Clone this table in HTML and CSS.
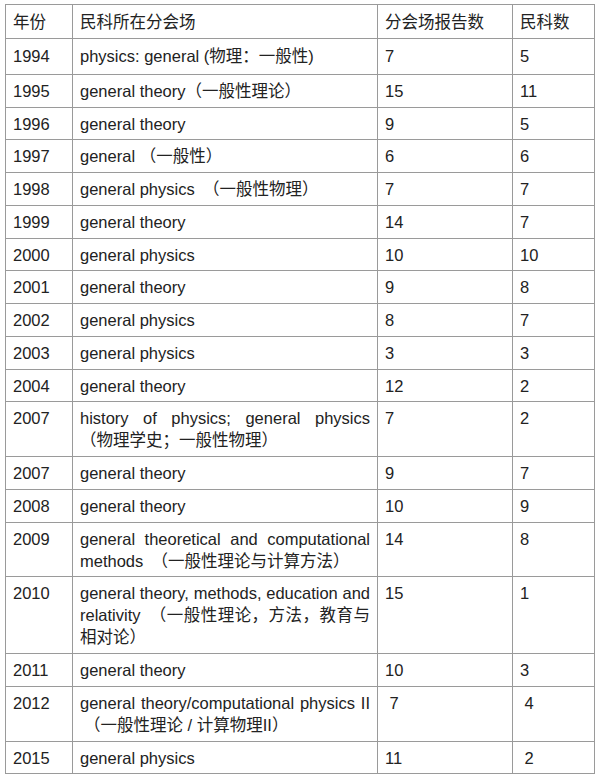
FILE: index.html
```html
<!DOCTYPE html>
<html lang="zh">
<head>
<meta charset="utf-8">
<title>民科所在分会场</title>
<link rel="stylesheet" href="styles.css">
</head>
<body>
<table class="data">
  <colgroup>
    <col class="c-year">
    <col class="c-session">
    <col class="c-reports">
    <col class="c-count">
  </colgroup>
  <thead>
    <tr><th>年份</th><th>民科所在分会场</th><th>分会场报告数</th><th>民科数</th></tr>
  </thead>
  <tbody>
    <tr class="tall"><td>1994</td><td class="session">physics: general (物理：一般性)</td><td>7</td><td>5</td></tr>
    <tr><td>1995</td><td class="session">general theory（一般性理论）</td><td>15</td><td>11</td></tr>
    <tr><td>1996</td><td class="session">general theory</td><td>9</td><td>5</td></tr>
    <tr><td>1997</td><td class="session">general （一般性）</td><td>6</td><td>6</td></tr>
    <tr><td>1998</td><td class="session">general physics　（一般性物理）</td><td>7</td><td>7</td></tr>
    <tr><td>1999</td><td class="session">general theory</td><td>14</td><td>7</td></tr>
    <tr><td>2000</td><td class="session">general physics</td><td>10</td><td>10</td></tr>
    <tr><td>2001</td><td class="session">general theory</td><td>9</td><td>8</td></tr>
    <tr><td>2002</td><td class="session">general physics</td><td>8</td><td>7</td></tr>
    <tr><td>2003</td><td class="session">general physics</td><td>3</td><td>3</td></tr>
    <tr><td>2004</td><td class="session">general theory</td><td>12</td><td>2</td></tr>
    <tr><td>2007</td><td class="session">history of physics; general physics <span class="block">（物理学史；一般性物理）</span></td><td>7</td><td>2</td></tr>
    <tr><td>2007</td><td class="session">general theory</td><td>9</td><td>7</td></tr>
    <tr><td>2008</td><td class="session">general theory</td><td>10</td><td>9</td></tr>
    <tr><td>2009</td><td class="session">general theoretical and computational methods　（一般性理论与计算方法）</td><td>14</td><td>8</td></tr>
    <tr><td>2010</td><td class="session">general theory, methods, education and relativity　（一般性理论，方法，教育与相对论）</td><td>15</td><td>1</td></tr>
    <tr><td>2011</td><td class="session">general theory</td><td>10</td><td>3</td></tr>
    <tr><td>2012</td><td class="session">general theory/computational physics II <span class="block indent">（一般性理论 / 计算物理II）</span></td><td>&nbsp;7</td><td>&nbsp;4</td></tr>
    <tr><td>2015</td><td class="session">general physics</td><td>11</td><td>&nbsp;2</td></tr>
  </tbody>
</table>
</body>
</html>
```

FILE: styles.css
```css
html, body {
  margin: 0;
  padding: 0;
  background: #ffffff;
}

body {
  padding: 4px 0 0 5px;
  font-family: "Liberation Sans", "Noto Sans CJK SC", sans-serif;
  font-size: 16.5px;
  color: #222222;
}

.data {
  border-collapse: collapse;
  table-layout: fixed;
  width: 589px;
}

.c-year { width: 67px; }
.c-session { width: 305px; }
.c-reports { width: 135px; }
.c-count { width: 82px; }

.data th,
.data td {
  border: 1px solid #9a9a9a;
  padding: 5px 7px 4.75px;
  line-height: 22px;
  text-align: left;
  vertical-align: top;
  font-weight: normal;
}

.data th {
  padding-top: 6px;
}

.data tr.tall td {
  padding-top: 6px;
  padding-bottom: 7px;
}

.data td.session {
  text-align: justify;
}

.block {
  display: inline-block;
}

.indent {
  padding-left: 4px;
}
```
